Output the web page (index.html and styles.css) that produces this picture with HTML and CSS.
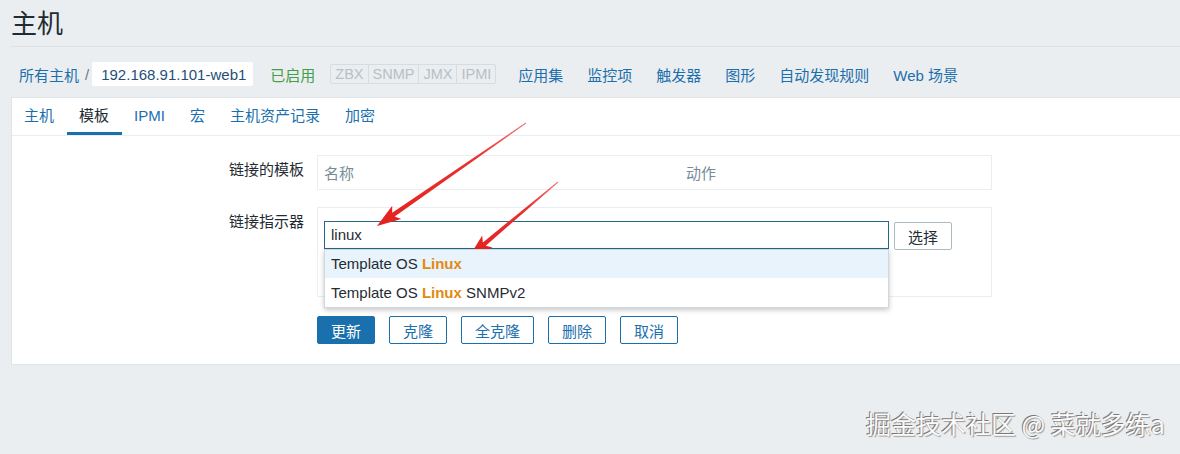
FILE: index.html
```html
<!DOCTYPE html>
<html lang="zh">
<head>
<meta charset="utf-8">
<title>主机</title>
<link rel="stylesheet" href="styles.css">
</head>
<body>
<div class="page">
  <h1 class="title">主机</h1>

  <nav class="crumbs">
    <a class="link" href="#">所有主机</a>
    <span class="sep">/</span>
    <span class="current">192.168.91.101-web1</span>
    <span class="status">已启用</span>
    <span class="avail"><span>ZBX</span><span>SNMP</span><span>JMX</span><span>IPMI</span></span>
    <a class="link nav-link first" href="#">应用集</a>
    <a class="link nav-link" href="#">监控项</a>
    <a class="link nav-link" href="#">触发器</a>
    <a class="link nav-link" href="#">图形</a>
    <a class="link nav-link" href="#">自动发现规则</a>
    <a class="link nav-link" href="#">Web 场景</a>
  </nav>

  <section class="card">
    <ul class="tabs">
      <li class="tab">主机</li>
      <li class="tab active">模板</li>
      <li class="tab">IPMI</li>
      <li class="tab">宏</li>
      <li class="tab">主机资产记录</li>
      <li class="tab">加密</li>
    </ul>

    <div class="form">
      <div class="row">
        <label class="label">链接的模板</label>
        <div class="field box">
          <div class="thead">
            <span class="th th-name">名称</span>
            <span class="th">动作</span>
          </div>
        </div>
      </div>

      <div class="row row2">
        <label class="label">链接指示器</label>
        <div class="field box box2">
          <div class="ms">
            <div class="input-wrap">
              <div class="input">linux</div>
              <ul class="dropdown">
                <li class="opt hl">Template OS <b>Linux</b></li>
                <li class="opt">Template OS <b>Linux</b> SNMPv2</li>
              </ul>
            </div>
            <button class="btn-grey">选择</button>
          </div>
        </div>
      </div>

      <div class="row row3">
        <span></span>
        <div class="buttons">
          <button class="btn primary">更新</button>
          <button class="btn">克隆</button>
          <button class="btn">全克隆</button>
          <button class="btn">删除</button>
          <button class="btn">取消</button>
        </div>
      </div>
    </div>
  </section>

  <div class="watermark">掘金技术社区 @ 菜就多练a</div>

  <svg class="arrows" width="1180" height="454" viewBox="0 0 1180 454">
    <defs>
      <linearGradient id="g1" x1="526" y1="123" x2="377" y2="226" gradientUnits="userSpaceOnUse">
        <stop offset="0" stop-color="#f07a7c"/>
        <stop offset="0.35" stop-color="#e8312f"/>
        <stop offset="1" stop-color="#e3221f"/>
      </linearGradient>
      <linearGradient id="g2" x1="558" y1="182" x2="469" y2="257" gradientUnits="userSpaceOnUse">
        <stop offset="0" stop-color="#f07a7c"/>
        <stop offset="0.35" stop-color="#e8312f"/>
        <stop offset="1" stop-color="#e3221f"/>
      </linearGradient>
    </defs>
    <polygon fill="url(#g1)" points="526.3,123.4 394.7,216.4 401.3,219 377,226 392.2,205.7 392.2,212.8 525.7,122.6"/>
    <polygon fill="url(#g2)" points="558.3,182.4 485.7,245.8 492.5,247.5 469,257 482.2,235.5 482.9,242.4 557.7,181.6"/>
  </svg>
</div>
</body>
</html>
```

FILE: styles.css
```css
* { box-sizing: border-box; }

html, body {
  margin: 0;
  padding: 0;
  background: #ebeef0;
}

body {
  font-family: "Liberation Sans", Arial, "Noto Sans CJK SC", sans-serif;
  font-size: 15px;
  color: #1f2c33;
}

.page {
  position: relative;
  width: 1180px;
  height: 454px;
  padding-left: 11px;
  overflow: hidden;
}

.title {
  margin: 0;
  padding-top: 8px;
  height: 47px;
  font-size: 26px;
  font-weight: normal;
  line-height: 32px;
  color: #1f2c33;
  border-bottom: 1px solid #dce2e5;
}

.crumbs {
  display: flex;
  align-items: center;
  height: 24px;
  margin-top: 15px;
  padding-left: 8px;
  white-space: nowrap;
}

.link {
  color: #1b6fad;
  text-decoration: none;
}

.sep {
  color: #6b7c85;
  margin: 0 3px 0 6px;
}

.current {
  display: inline-flex;
  align-items: center;
  height: 24px;
  padding: 0 7px 0 9px;
  background: #fff;
  color: #1f4f78;
  border-radius: 2px;
}

.status {
  margin-left: 17px;
  color: #429e47;
}

.avail {
  display: inline-flex;
  margin-left: 15px;
  height: 20px;
  border: 1px solid #d5dde1;
  border-radius: 2px;
}

.avail span {
  display: inline-flex;
  align-items: center;
  padding: 0 4px;
  font-size: 14.5px;
  color: #b4c1c7;
  border-left: 1px solid #d5dde1;
}

.avail span:first-child { border-left: none; }

.nav-link { margin-left: 24px; }
.nav-link.first { margin-left: 22px; }

.card {
  margin-top: 11px;
  background: #fff;
  border: 1px solid #dfe4e7;
  border-right: none;
  height: 268px;
}

.tabs {
  display: flex;
  margin: 0;
  padding: 0;
  list-style: none;
  height: 38px;
  border-bottom: 1px solid #ebeef0;
}

.tab {
  height: 37px;
  line-height: 36px;
  padding: 0 12.5px;
  color: #1b6fad;
  border-bottom: 3px solid transparent;
}

.tab:first-child { padding-left: 12px; }

.tab.active {
  color: #1f2c33;
  border-bottom-color: #1a70ad;
}

.form {
  padding: 19px 0 20px 0;
}

.row {
  display: grid;
  grid-template-columns: 292px 675px;
  column-gap: 13px;
}

.row2 { margin-top: 17px; }
.row3 { margin-top: 19px; }

.label {
  text-align: right;
  padding-top: 6px;
  line-height: 18px;
  color: #1f2c33;
}

.box {
  border: 1px solid #ebeef0;
}

.thead {
  display: flex;
  height: 33px;
  align-items: center;
}

.th {
  padding-left: 6px;
  color: #768d99;
}

.th-name { width: 362px; }

.box2 {
  padding: 13px 6px 0 6px;
  height: 90px;
}

.ms {
  display: flex;
  align-items: flex-start;
}

.input-wrap {
  position: relative;
  width: 565px;
}

.input {
  height: 28px;
  line-height: 26px;
  padding-left: 6px;
  border: 1px solid #24688c;
  color: #1f2c33;
  background: #fff;
}

.dropdown {
  position: absolute;
  left: 0;
  top: 28px;
  width: 565px;
  margin: 0;
  padding: 0;
  list-style: none;
  background: #fff;
  border: 1px solid #cfd8dc;
  box-shadow: 0 2px 5px rgba(0, 0, 0, 0.22);
  z-index: 2;
}

.opt {
  height: 29px;
  line-height: 29px;
  padding-left: 6px;
  color: #1f2c33;
}

.opt.hl { background: #e8f3fb; height: 28px; line-height: 28px; }

.opt b {
  color: #e28a12;
  font-weight: bold;
}

.btn-grey {
  margin-left: 5px;
  margin-top: 1px;
  width: 58px;
  height: 28px;
  padding: 0;
  font: inherit;
  color: #1f2c33;
  background: #fff;
  border: 1px solid #acbbc2;
  border-radius: 2px;
}

.buttons {
  display: flex;
  gap: 14px;
}

.btn {
  height: 28px;
  padding: 0 13px;
  font: inherit;
  color: #1b6fad;
  background: #fff;
  border: 1px solid #1b6fad;
  border-radius: 2px;
}

.btn.primary {
  color: #fff;
  background: #1a70ad;
  border-color: #1a70ad;
}

.watermark {
  position: absolute;
  left: 866px;
  top: 406px;
  font-family: "Noto Sans CJK SC", "Liberation Sans", sans-serif;
  font-size: 25px;
  line-height: 34px;
  color: #fafafa;
  white-space: nowrap;
  text-shadow: -1px -1px 0 #7a7a7a, 1px 1px 1px #9a9a9a;
}

.arrows {
  position: absolute;
  left: 0;
  top: 0;
  pointer-events: none;
}
```
